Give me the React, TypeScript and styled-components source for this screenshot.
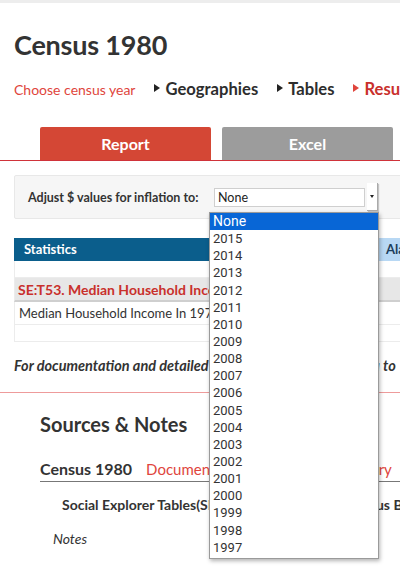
import React from "react";
import styled, { createGlobalStyle } from "styled-components";

const Global = createGlobalStyle`
  html, body { margin: 0; padding: 0; background: #fff; }
  body { font-family: Lato, "Noto Sans", sans-serif; color: #333; overflow: hidden; }
`;

const Page = styled.div`
  position: relative;
  width: 400px;
  height: 568px;
  overflow: hidden;
`;

const TopStrip = styled.div`
  height: 3px;
  background: #ededed;
`;

const Title = styled.h1`
  margin: 26px 0 0 14px;
  font-size: 27px;
  font-weight: 700;
  line-height: 32px;
  color: #333;
  letter-spacing: -0.2px;
`;

const Crumbs = styled.div`
  display: flex;
  align-items: center;
  margin: 16px 0 0 14px;
  height: 24px;
  white-space: nowrap;
`;

const CrumbLink = styled.span`
  font-size: 14px;
  color: #e0453c;
  margin-right: 19px;
`;

const Crumb = styled.span<{ $active?: boolean }>`
  display: flex;
  align-items: center;
  font-size: 16.6px;
  font-weight: 700;
  color: ${(p) => (p.$active ? "#c9302c" : "#2d2d2d")};
  margin-right: 19px;
  &::before {
    content: "";
    width: 0;
    height: 0;
    border-top: 4px solid transparent;
    border-bottom: 4px solid transparent;
    border-left: 6px solid ${(p) => (p.$active ? "#e0453c" : "#222")};
    margin-right: 5px;
    margin-top: -2px;
  }
`;

const Tabs = styled.div`
  display: flex;
  gap: 11px;
  padding-left: 40px;
  margin-top: 26px;
  border-bottom: 1px solid #d0333a;
`;

const Tab = styled.div<{ $primary?: boolean }>`
  width: 171px;
  height: 33px;
  flex: none;
  display: flex;
  align-items: center;
  justify-content: center;
  border-radius: 2px 2px 0 0;
  background: ${(p) => (p.$primary ? "#d44735" : "#9c9c9c")};
  color: #fff;
  font-size: 16px;
  font-weight: 700;
`;

const Panel = styled.div`
  margin: 14px 0 0 14px;
  width: 420px;
  height: 44px;
  box-sizing: border-box;
  background: #f6f6f6;
  border: 1px solid #e8e8e8;
  border-radius: 2px;
  display: flex;
  align-items: center;
  padding-left: 13px;
`;

const PanelLabel = styled.span`
  font-size: 12.5px;
  font-weight: 700;
  color: #333;
  width: 186px;
  flex: none;
`;

const SelectWrap = styled.div`
  display: flex;
  align-items: center;
  gap: 2px;
`;

const SelectBox = styled.div`
  width: 151px;
  height: 19px;
  box-sizing: border-box;
  background: #fff;
  border: 1px solid #cfcfcf;
  font-size: 12.5px;
  line-height: 17px;
  padding-left: 3px;
  color: #222;
`;

const SelectArrow = styled.div`
  width: 11px;
  height: 28px;
  box-sizing: border-box;
  background: #fff;
  border-right: 1px solid #aaa;
  border-bottom: 1px solid #aaa;
  box-shadow: 1px 1px 1px rgba(0, 0, 0, 0.2);
  display: flex;
  align-items: center;
  justify-content: center;
  &::after {
    content: "";
    border-left: 2.5px solid transparent;
    border-right: 2.5px solid transparent;
    border-top: 3px solid #222;
  }
`;

const Table = styled.div`
  margin: 19px 0 0 14px;
  width: 440px;
`;

const HeadRow = styled.div`
  display: flex;
  height: 23px;
`;

const HeadCell = styled.div<{ $light?: boolean; $w: number }>`
  width: ${(p) => p.$w}px;
  flex: none;
  box-sizing: border-box;
  background: ${(p) => (p.$light ? "#b8d8f4" : "#0b5e8c")};
  color: ${(p) => (p.$light ? "#1c3d5a" : "#fff")};
  font-size: 13px;
  font-weight: 700;
  line-height: 23px;
  padding-left: ${(p) => (p.$light ? 7 : 10)}px;
`;

const Row = styled.div<{ $kind?: "empty" | "group" | "data" }>`
  height: ${(p) => (p.$kind === "group" ? 24 : p.$kind === "data" ? 23 : 17)}px;
  box-sizing: border-box;
  background: ${(p) => (p.$kind === "group" ? "#e7e7e7" : "#fff")};
  border-bottom: ${(p) =>
    p.$kind === "group" ? "2px solid #cfcfcf" : "1px solid #ececec"};
  border-left: 1px solid #ececec;
  display: flex;
  align-items: center;
  padding-left: ${(p) => (p.$kind === "group" ? 3 : 4)}px;
  white-space: nowrap;
`;

const GroupText = styled.span`
  color: #c9302c;
  font-size: 14px;
  font-weight: 700;
`;

const DataText = styled.span`
  color: #333;
  font-size: 13px;
`;

const DocNote = styled.p`
  margin: 15px 0 0 14px;
  font-size: 14.5px;
  font-style: italic;
  font-weight: 700;
  color: #333;
  white-space: nowrap;
`;

const Divider = styled.div`
  margin-top: 18px;
  height: 1px;
  background: #ee9b9b;
`;

const Section = styled.div`
  padding-left: 40px;
`;

const SectionTitle = styled.h2`
  margin: 19px 0 0 0;
  font-size: 20px;
  font-weight: 700;
  line-height: 24px;
  color: #333;
`;

const SourceHead = styled.div`
  display: flex;
  align-items: baseline;
  margin-top: 23px;
  padding-bottom: 3px;
  border-bottom: 1px solid #777;
  white-space: nowrap;
`;

const SourceTitle = styled.span`
  font-size: 16px;
  font-weight: 700;
  color: #333;
  margin-right: 14px;
`;

const SourceLink = styled.span<{ $gap?: number }>`
  font-size: 15px;
  color: #e0453c;
  margin-right: ${(p) => p.$gap ?? 0}px;
`;

const SourceName = styled.div`
  margin: 14px 0 0 22px;
  font-size: 14px;
  font-weight: 700;
  color: #333;
  white-space: nowrap;
`;

const Notes = styled.div`
  margin: 17px 0 0 13px;
  font-size: 14px;
  font-style: italic;
  color: #333;
`;

const Dropdown = styled.ul`
  position: absolute;
  left: 209px;
  top: 212px;
  width: 170px;
  margin: 0;
  padding: 0 0 2px 0;
  list-style: none;
  background: #fff;
  border: 1px solid #9a9a9a;
  box-sizing: border-box;
  box-shadow: 1px 2px 4px rgba(0, 0, 0, 0.3);
`;

const Option = styled.li<{ $selected?: boolean }>`
  height: 17.15px;
  line-height: 17px;
  padding-left: 3px;
  font-family: Roboto, "Noto Sans", sans-serif;
  color: ${(p) => (p.$selected ? "#fff" : "#333")};
  background: ${(p) => (p.$selected ? "#0866d6" : "transparent")};
  font-size: ${(p) => (p.$selected ? 14 : 13)}px;
`;

const years = [
  "None", "2015", "2014", "2013", "2012", "2011", "2010", "2009", "2008", "2007",
  "2006", "2005", "2004", "2003", "2002", "2001", "2000", "1999", "1998", "1997",
];

export default function App() {
  return (
    <Page>
      <Global />
      <TopStrip />
      <Title>Census 1980</Title>
      <Crumbs>
        <CrumbLink>Choose census year</CrumbLink>
        <Crumb>Geographies</Crumb>
        <Crumb>Tables</Crumb>
        <Crumb $active>Results</Crumb>
      </Crumbs>
      <Tabs>
        <Tab $primary>Report</Tab>
        <Tab>Excel</Tab>
      </Tabs>
      <Panel>
        <PanelLabel>Adjust $ values for inflation to:</PanelLabel>
        <SelectWrap>
          <SelectBox>None</SelectBox>
          <SelectArrow />
        </SelectWrap>
      </Panel>
      <Table>
        <HeadRow>
          <HeadCell $w={365}>Statistics</HeadCell>
          <HeadCell $w={75} $light>Alabama</HeadCell>
        </HeadRow>
        <Row $kind="empty" />
        <Row $kind="group">
          <GroupText>SE:T53. Median Household Income In 1979</GroupText>
        </Row>
        <Row $kind="data">
          <DataText>Median Household Income In 1979 (In 1979 Dollars)</DataText>
        </Row>
        <Row $kind="empty" />
      </Table>
      <DocNote>For documentation and detailed information about this data to</DocNote>
      <Divider />
      <Section>
        <SectionTitle>Sources &amp; Notes</SectionTitle>
        <SourceHead>
          <SourceTitle>Census 1980</SourceTitle>
          <SourceLink $gap={39}>Documentation</SourceLink>
          <SourceLink>Data Dictionary</SourceLink>
        </SourceHead>
        <SourceName>Social Explorer Tables(SE) (Based on The U. S. Census Bureau)</SourceName>
        <Notes>Notes</Notes>
      </Section>
      <Dropdown>
        {years.map((y, i) => (
          <Option key={y} $selected={i === 0}>
            {y}
          </Option>
        ))}
      </Dropdown>
    </Page>
  );
}
